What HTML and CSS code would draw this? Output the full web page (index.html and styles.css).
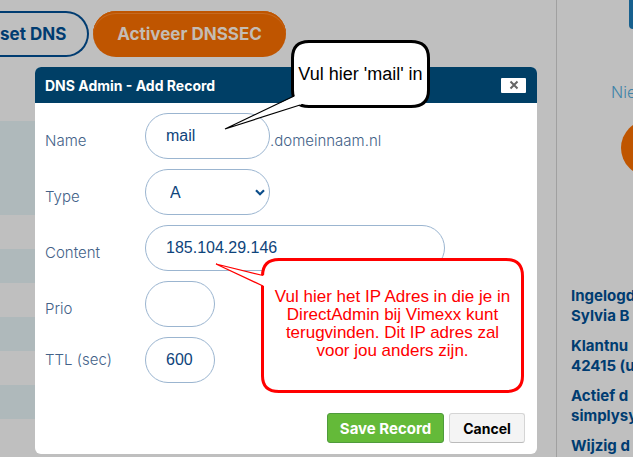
FILE: index.html
```html
<!DOCTYPE html>
<html lang="nl">
<head>
<meta charset="utf-8">
<title>DNS Admin</title>
<link rel="stylesheet" href="styles.css">
</head>
<body>
<div class="page">
  <main class="main">
    <div class="toolbar">
      <button class="pill pill-outline" type="button">set DNS</button>
      <button class="pill pill-solid" type="button">Activeer DNSSEC</button>
    </div>
    <div class="records">
      <div class="record record-head"></div>
      <div class="record"></div>
      <div class="record"></div>
      <div class="record"></div>
      <div class="record"></div>
      <div class="record"></div>
      <div class="record"></div>
      <div class="record"></div>
    </div>
  </main>
  <aside class="side">
    <div class="side-logo"></div>
    <p class="side-news">Nie</p>
    <div class="side-action"></div>
    <div class="account">
      <p>Ingelogd<br>Sylvia B</p>
      <p>Klantnu<br>42415 (u</p>
      <p>Actief d<br>simplysy</p>
      <p>Wijzig d</p>
    </div>
  </aside>
</div>

<section class="dialog" role="dialog" aria-labelledby="dialog-title">
  <header class="dialog-head">
    <h2 id="dialog-title">DNS Admin - Add Record</h2>
    <button class="close" type="button" aria-label="Close">
      <svg width="10" height="10" viewBox="0 0 10 10"><path d="M1.5 1.5 8.5 8.5M8.5 1.5 1.5 8.5" stroke="#666" stroke-width="2" fill="none"/></svg>
    </button>
  </header>
  <form class="form">
    <div class="row">
      <label for="name">Name</label>
      <input class="field medium" id="name" type="text" value="mail">
      <span class="suffix">.domeinnaam.nl</span>
    </div>
    <div class="row">
      <label for="type">Type</label>
      <span class="select-wrap">
        <select class="field medium" id="type"><option>A</option></select>
        <svg class="chevron" width="10" height="7" viewBox="0 0 10 7"><path d="M1 1.2 5 5.2 9 1.2" fill="none" stroke="#0e4f8b" stroke-width="2.2"/></svg>
      </span>
    </div>
    <div class="row">
      <label for="content">Content</label>
      <input class="field large" id="content" type="text" value="185.104.29.146">
    </div>
    <div class="row">
      <label for="prio">Prio</label>
      <input class="field small" id="prio" type="text">
    </div>
    <div class="row row-centered">
      <label for="ttl">TTL (sec)</label>
      <input class="field small" id="ttl" type="text" value="600">
    </div>
    <div class="actions">
      <button class="btn btn-save" type="button">Save Record</button>
      <button class="btn btn-cancel" type="button">Cancel</button>
    </div>
  </form>
</section>

<div class="callout callout-name">
  <svg width="206" height="92" viewBox="0 0 206 92">
    <path d="M85 1.5H187Q204.500 1.500 204.500 18V50Q204.500 66.500 187 66.500H85Q68.500 66.500 68.500 50V18Q68.500 1.500 85 1.500Z" fill="#fff" stroke="#000" stroke-width="3"/>
    <path d="M71 56 1 89 76 65 84 60Z" fill="#fff"/>
    <path d="M70 56 1 89 76 65" fill="none" stroke="#000" stroke-width="1.200"/>
  </svg>
  <p>Vul hier 'mail' in</p>
</div>
<div class="callout callout-content">
  <svg width="311" height="136" viewBox="0 0 311 136">
    <path d="M64 1.500H291Q307.500 1.500 307.500 18V118Q307.500 133.500 291 133.500H64Q47.500 133.500 47.500 118V18Q47.500 1.500 64 1.500Z" fill="#fff" stroke="#f00" stroke-width="3"/>
    <path d="M50 17.500 46 17 1 6 46 27.500 50 28Z" fill="#fff"/>
    <path d="M48 17.500 1 6 48 28" fill="none" stroke="#f00" stroke-width="1.200"/>
  </svg>
  <p>Vul hier het IP Adres in die je in<br>DirectAdmin bij Vimexx kunt<br>terugvinden. Dit IP adres zal<br>voor jou anders zijn.</p>
</div>
</body>
</html>
```

FILE: styles.css
```css
* {
  box-sizing: border-box;
}

body {
  margin: 0;
  min-height: 100vh;
  overflow: hidden;
  background: #bfbfbf;
  font-family: Inter, "Open Sans", sans-serif;
  color: #003c71;
}

h2,
p {
  margin: 0;
}

button {
  font-family: inherit;
}

/* Page behind the dialog */
.page {
  display: flex;
  height: 100vh;
  overflow: hidden;
}

.main {
  flex: 1;
  min-width: 0;
}

.toolbar {
  display: flex;
  gap: 4px;
  padding-top: 11px;
}

.pill {
  height: 46px;
  border-radius: 23px;
  font-size: 17px;
  font-weight: 700;
  white-space: nowrap;
}

.pill-outline {
  width: 89px;
  padding: 0 22px 0 0;
  border: 2px solid #003c71;
  border-left: 0;
  border-radius: 0 23px 23px 0;
  background: transparent;
  color: #003c71;
  text-align: right;
}

.pill-solid {
  width: 193px;
  padding: 0;
  border: 0;
  background: #bf5500;
  box-shadow: inset 0 2px 0 #bf5500, inset 0 3px 0 #c56a22;
  color: #c4bcb4;
}

.records {
  margin: 64px 20px 0 0;
}

.record {
  height: 34px;
}

.record-head {
  height: 94px;
}

.record:nth-child(odd) {
  background: #afb9bb;
}

.side {
  flex: 0 0 77px;
  padding-left: 14px;
  border-left: 1px solid #a0a0a0;
  overflow: hidden;
  white-space: nowrap;
}

.side-logo {
  height: 29px;
  margin-left: 58px;
  border-radius: 0 0 0 4px;
  background: #17608e;
}

.side-news {
  margin: 53px 0 0 40px;
  color: #3f84a8;
  font-size: 16px;
  font-weight: 300;
  line-height: 20px;
}

.side-action {
  width: 180px;
  height: 56px;
  margin: 18px 0 0 50px;
  border-radius: 28px;
  background: #bf5500;
}

.account {
  margin-top: 110px;
  font-size: 15px;
  font-weight: 700;
  line-height: 20px;
}

.account p {
  margin-bottom: 10px;
}

/* Dialog */
.dialog {
  position: absolute;
  top: 67px;
  right: 96px;
  left: 35px;
  border-radius: 6px;
  background: #fff;
  overflow: hidden;
}

.dialog-head {
  display: flex;
  align-items: center;
  justify-content: space-between;
  height: 36px;
  padding: 0 11px 0 10px;
  background: #003f66;
}

.dialog-head h2 {
  color: #fff;
  font-size: 14px;
  font-weight: 700;
}

.close {
  display: flex;
  align-items: center;
  justify-content: center;
  width: 25px;
  height: 15px;
  padding: 0;
  border: 0;
  border-radius: 1px;
  background: #fff;
}

.form {
  display: flex;
  flex-direction: column;
  gap: 10px;
  padding: 10px 12px 11px 10px;
}

.row {
  display: flex;
  align-items: flex-start;
}

.row label {
  flex: 0 0 100px;
}

.row label,
.suffix {
  padding-top: 18px;
  color: #436288;
  font-size: 15px;
  font-weight: 300;
  line-height: 20px;
}

.row-centered {
  align-items: center;
}

.row-centered label {
  padding-top: 0;
}

.field {
  height: 46px;
  padding: 0 20px;
  border: 1px solid #9bb5d0;
  border-radius: 23px;
  background: #fff;
  color: #0e447b;
  font-family: "Liberation Sans", Arial, sans-serif;
  font-size: 16px;
}

.small {
  width: 70px;
}

.medium {
  width: 125px;
}

.large {
  width: 300px;
}

.select-wrap {
  position: relative;
  display: flex;
}

select.field {
  padding-left: 24px;
  appearance: none;
}

.chevron {
  position: absolute;
  top: 20px;
  right: 5px;
  pointer-events: none;
}

.actions {
  display: flex;
  justify-content: flex-end;
  gap: 5px;
  margin-top: 20px;
}

.btn {
  height: 30px;
  padding: 0;
  border-radius: 3px;
  font-size: 14px;
  font-weight: 700;
}

.btn-save {
  width: 117px;
  border: 1px solid #4f9b3c;
  background: #64ba39;
  color: #fff;
  font-size: 15px;
}

.btn-cancel {
  width: 76px;
  border: 1px solid #d5d5d5;
  border-bottom-color: #bbb;
  background: #f4f4f4;
  color: #000;
}

/* Annotation balloons */
.callout {
  position: absolute;
  font-family: "Liberation Sans", Arial, sans-serif;
  font-size: 17px;
  line-height: 18px;
  text-align: center;
  white-space: nowrap;
}

.callout svg {
  display: block;
}

.callout p {
  position: absolute;
}

.callout-name {
  top: 40px;
  left: 224px;
  color: #000;
  font-size: 18px;
}

.callout-name p {
  top: 25px;
  right: 0;
  left: 67px;
}

.callout-content {
  top: 258px;
  left: 215px;
  color: #f00;
}

.callout-content p {
  top: 30px;
  right: 2px;
  left: 46px;
}
```
